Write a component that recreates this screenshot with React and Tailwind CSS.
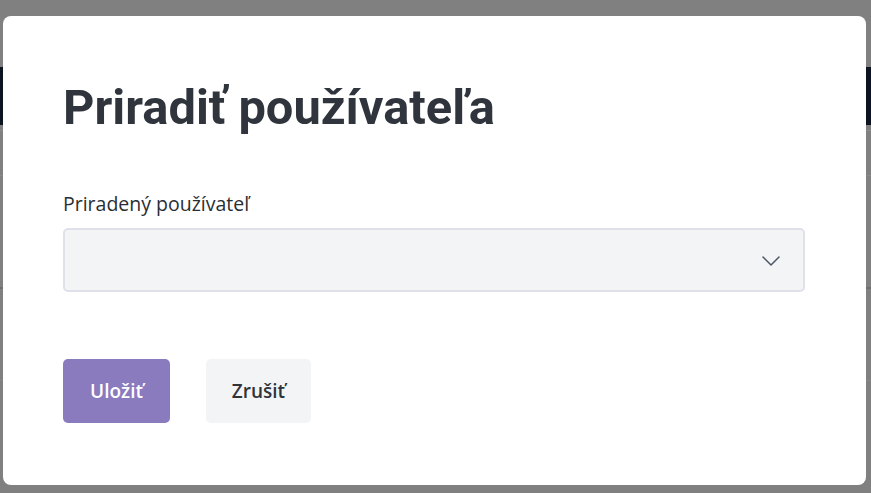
export default function App() {
  return (
    <div className="relative h-[493px] w-[871px] overflow-hidden bg-[#808080]">
      {/* page behind the overlay */}
      <div className="pt-[67px]">
        <div className="h-[58px] bg-[#0c1422]" />
        <div className="h-[5px]" />
        <div className="h-px bg-[#8c8c8c]" />
        <div className="h-[44px]" />
        <div className="h-px bg-[#8a8a8a]" />
        <div className="h-[111px]" />
        <div className="h-[2px] bg-[#6f6f6f]" />
        <div className="h-[91px]" />
        <div className="h-px bg-[#878787]" />
      </div>

      <div
        className="absolute left-[3px] top-[16px] flex h-[469px] w-[863px] flex-col rounded-lg bg-white px-[60px] pt-[64px]"
        style={{ fontFamily: "'Open Sans', 'Noto Sans', sans-serif" }}
      >
        <h1
          className="text-[48.8px] font-bold leading-[56px] text-[#30353d]"
          style={{ fontFamily: "Roboto, 'Liberation Sans', sans-serif" }}
        >
          Priradiť používateľa
        </h1>

        <label className="mt-[55px] block text-[19.5px] leading-[26px] text-[#2a2e33]">
          Priradený používateľ
        </label>
        <div className="mt-[11px] flex h-[64px] w-[742px] items-center justify-end rounded-[5px] border-2 border-[#e0e1e8] bg-[#f3f4f6] pr-[23px]">
          <svg width="18" height="10" viewBox="0 0 18 10" fill="none" className="mt-[2px]">
            <path d="M1 1l8 8 8-8" stroke="#4b5563" strokeWidth="1.5" strokeLinecap="round" strokeLinejoin="round" />
          </svg>
        </div>

        <div className="mt-[67px] flex gap-[36px]">
          <button className="h-[64px] w-[107px] rounded-[5px] bg-[#8a7bbf] text-[19px] font-semibold text-white">
            Uložiť
          </button>
          <button className="h-[64px] w-[105px] rounded-[5px] bg-[#f3f4f6] text-[19px] font-semibold text-[#2f343b]">
            Zrušiť
          </button>
        </div>
      </div>
    </div>
  );
}
